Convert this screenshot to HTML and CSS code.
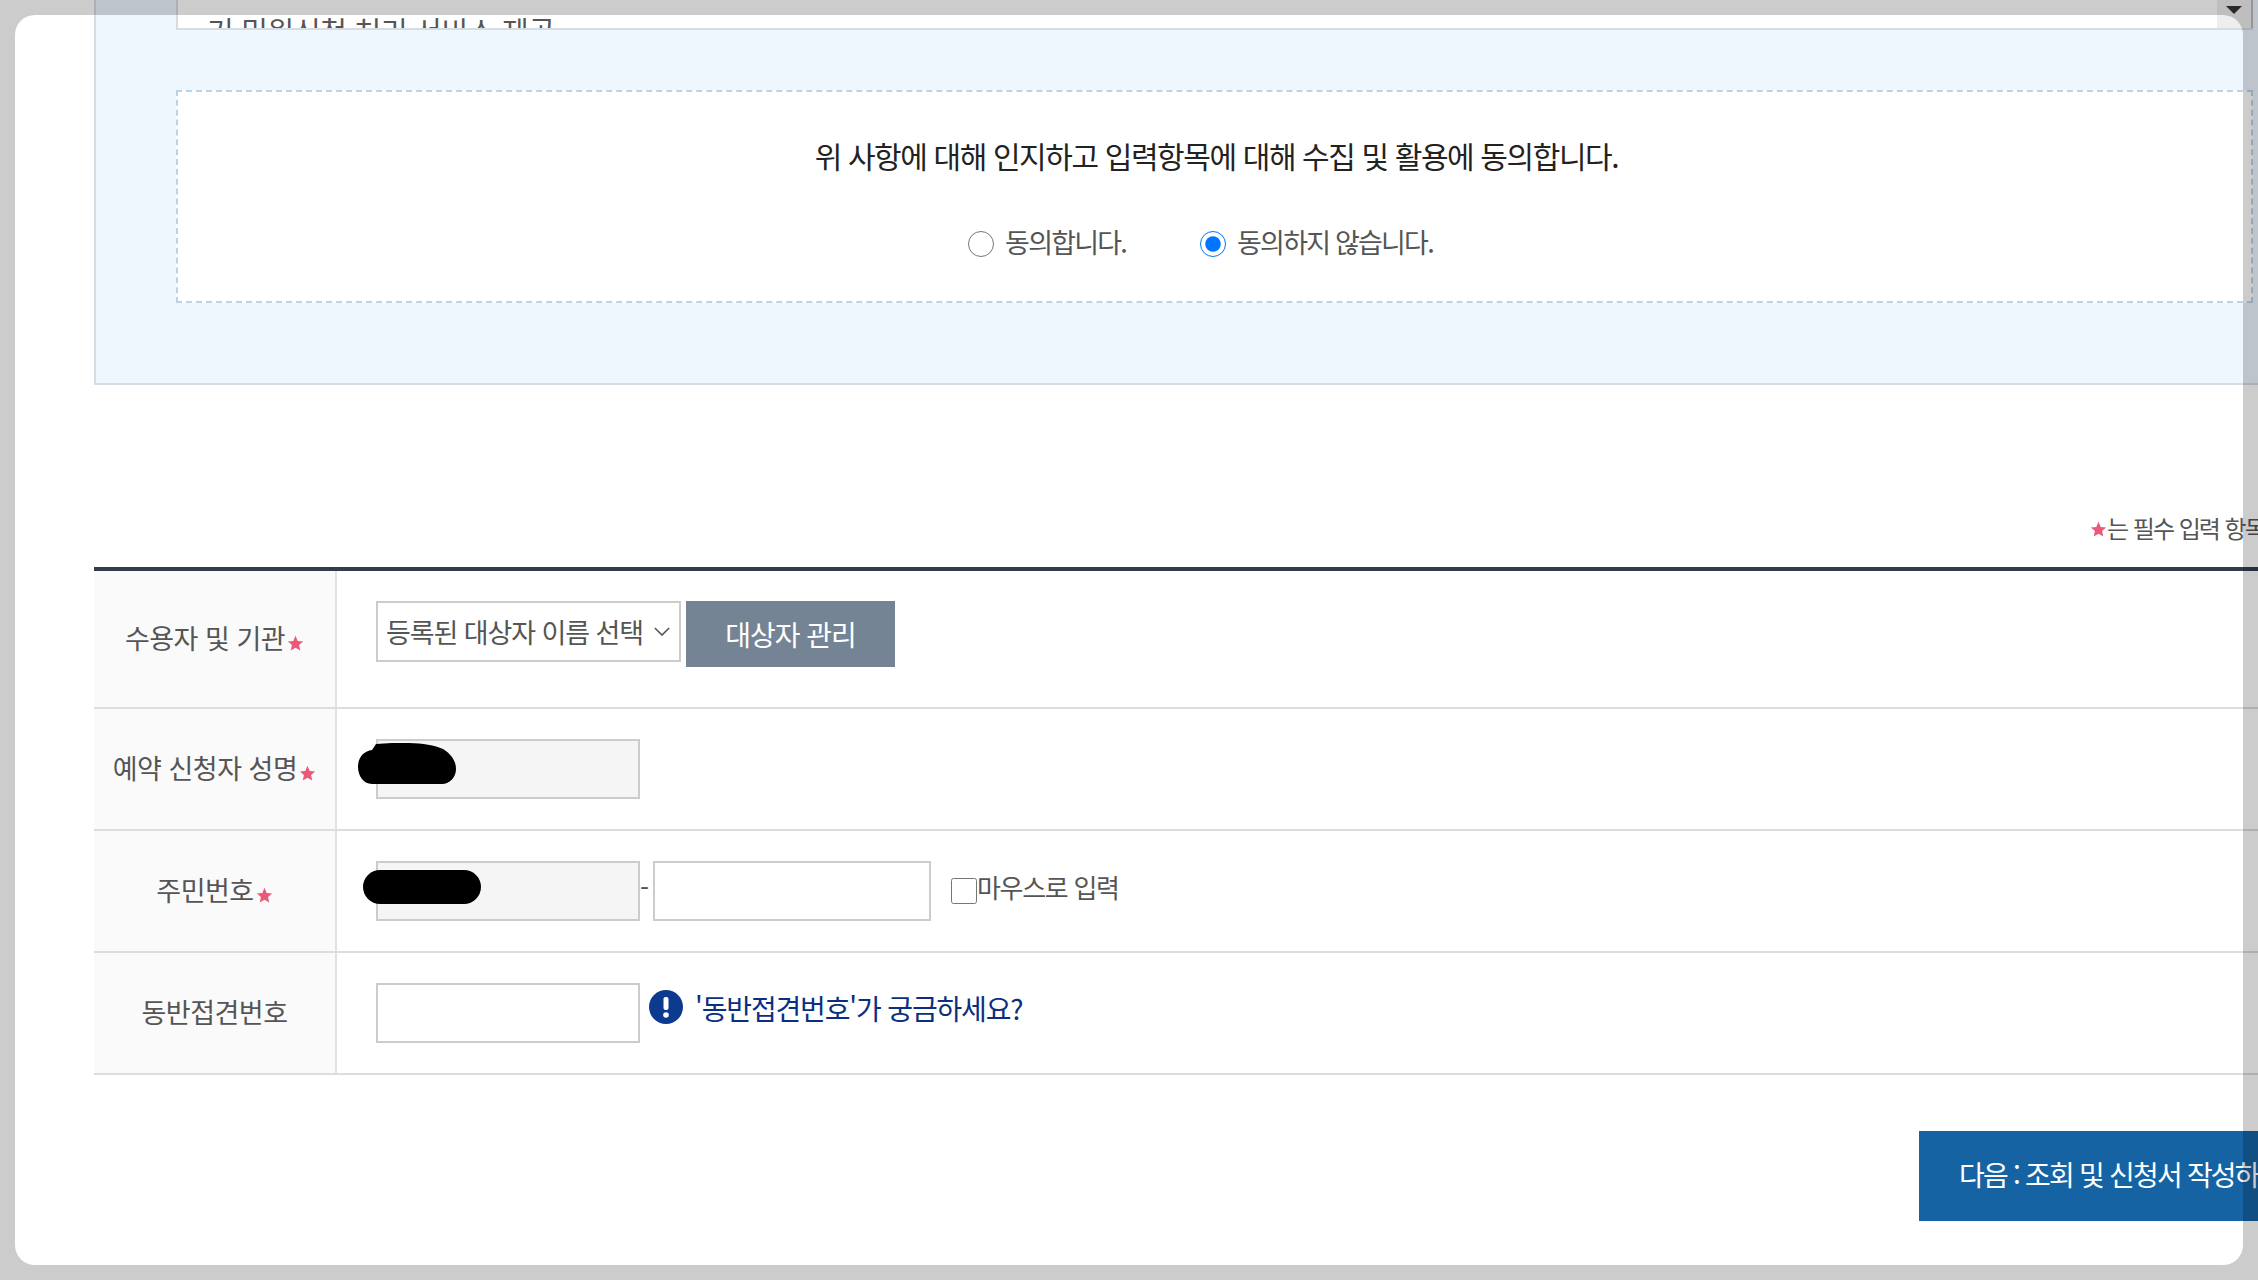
FILE: index.html
```html
<!DOCTYPE html>
<html lang="ko">
<head>
    <meta charset="UTF-8">
    <title>예약 신청</title>
    <link rel="stylesheet" href="styles.css">
</head>
<body>
    <div class="page">
        <!-- Consent panel -->
        <div class="consent">
            <div class="terms">
                <p class="terms-text">기 민원신청 처리 서비스 제공</p>
                <div class="scroll-btn"><span class="scroll-arrow"></span></div>
            </div>
            <div class="agree-box">
                <p class="agree-title">위 사항에 대해 인지하고 입력항목에 대해 수집 및 활용에 동의합니다.</p>
                <div class="agree-options">
                    <label class="agree-option"><input type="radio" name="agree">동의합니다.</label>
                    <label class="agree-option"><input type="radio" name="agree" checked>동의하지 않습니다.</label>
                </div>
            </div>
        </div>

        <div class="required-note">
            <svg class="star" viewBox="0 0 20 20"><path d="M10 1l2.600 6 6.400.6-4.800 4.300 1.400 6.300L10 15l-5.600 3.200 1.400-6.300L1 7.600 7.400 7z"/></svg>
            <span>는 필수 입력 항목입니다.</span>
        </div>

        <!-- Form -->
        <div class="form-table">
            <div class="form-row form-row-first">
                <div class="form-label">수용자 및 기관<svg class="star" viewBox="0 0 20 20"><path d="M10 1l2.600 6 6.400.6-4.800 4.300 1.400 6.300L10 15l-5.600 3.200 1.400-6.300L1 7.600 7.400 7z"/></svg></div>
                <div class="form-value">
                    <div class="select-box">
                        <span>등록된 대상자 이름 선택</span>
                        <svg class="chevron" viewBox="0 0 18 10"><path d="M1 1l8 8 8-8"/></svg>
                    </div>
                    <button class="btn-manage">대상자 관리</button>
                </div>
            </div>
            <div class="form-row">
                <div class="form-label">예약 신청자 성명<svg class="star" viewBox="0 0 20 20"><path d="M10 1l2.600 6 6.400.6-4.800 4.300 1.400 6.300L10 15l-5.600 3.200 1.400-6.300L1 7.600 7.400 7z"/></svg></div>
                <div class="form-value">
                    <div class="field-wrap">
                        <input type="text" class="field field-readonly" readonly>
                        <svg class="blob blob-name" viewBox="0 0 98 41"><path d="M18 1C40-1 70-1 85 6c10 6 13 14 13 20 0 8-6 15-14 15H14C5 41 0 32 0 24 0 14 6 8 14 7z"/></svg>
                    </div>
                </div>
            </div>
            <div class="form-row">
                <div class="form-label">주민번호<svg class="star" viewBox="0 0 20 20"><path d="M10 1l2.600 6 6.400.6-4.800 4.300 1.400 6.300L10 15l-5.600 3.200 1.400-6.300L1 7.600 7.400 7z"/></svg></div>
                <div class="form-value">
                    <div class="field-wrap">
                        <input type="text" class="field field-readonly" readonly>
                        <div class="blob blob-id"></div>
                    </div>
                    <span class="dash">-</span>
                    <input type="text" class="field field-wide">
                    <label class="mouse-input"><input type="checkbox">마우스로 입력</label>
                </div>
            </div>
            <div class="form-row">
                <div class="form-label">동반접견번호</div>
                <div class="form-value">
                    <input type="text" class="field">
                    <a class="help-link" href="#">
                        <svg class="help-icon" viewBox="0 0 34 34"><circle cx="17" cy="17" r="17"/><rect x="14.500" y="7" width="5" height="13" rx="2"/><circle cx="17" cy="25" r="2.800"/></svg>
                        '동반접견번호'가 궁금하세요?
                    </a>
                </div>
            </div>
        </div>

        <div class="actions">
            <button class="btn-next">다음 : 조회 및 신청서 작성하기</button>
        </div>
    </div>

    <div class="modal-hole"></div>
</body>
</html>
```

FILE: styles.css
```css
html, body {
    margin: 0;
    height: 100%;
    overflow: hidden;
    background: white;
}
body {
    font-family: "Noto Sans CJK KR", "Noto Sans", sans-serif;
    color: #555;
}
p {
    margin: 0;
}
.page {
    width: 2360px;
    height: 1280px;
    padding-left: 94px;
    box-sizing: border-box;
}

/* Consent panel */
.consent {
    height: 385px;
    box-sizing: border-box;
    padding: 0 107px 0 82px;
    background: #eef6fe;
    border-left: 2px solid #d5dde3;
    border-bottom: 2px solid #d5dde3;
}
.terms {
    display: flex;
    justify-content: space-between;
    height: 30px;
    overflow: hidden;
    box-sizing: border-box;
    margin-left: -2px;
    background: white;
    border-left: 2px solid #d5dde3;
    border-bottom: 2px solid #d5dde3;
}
.terms-text {
    padding: 11px 0 0 29px;
    font-size: 29px;
    line-height: 38px;
    letter-spacing: -0.3px;
}
.scroll-btn {
    flex: none;
    width: 36px;
    height: 28px;
    box-sizing: border-box;
    background: #eee;
    border-right: 2px solid #bbb;
}
.scroll-arrow {
    display: block;
    width: 0;
    margin: 6px 0 0 9px;
    border: 8px solid transparent;
    border-top: 8px solid #333;
    border-bottom: none;
}
.agree-box {
    height: 213px;
    box-sizing: border-box;
    margin: 60px 0 0 -2px;
    padding-left: 4px;
    background: white;
    border: 2px dashed #bcd3e6;
    text-align: center;
}
.agree-title {
    padding-top: 42px;
    font-size: 30px;
    line-height: 42px;
    letter-spacing: -1.4px;
    color: #222;
}
.agree-options {
    display: flex;
    justify-content: center;
    gap: 74px;
    margin: 48px 32px 0 0;
}
.agree-option {
    display: flex;
    align-items: center;
    gap: 11px;
    font-size: 27px;
    line-height: 36px;
    letter-spacing: -1.8px;
}
.agree-option input {
    width: 26px;
    height: 26px;
    margin: 4px 0 0;
}

.required-note {
    display: flex;
    align-items: center;
    height: 36px;
    margin-top: 124px;
    padding-left: 1996px;
    font-size: 24px;
    letter-spacing: -2px;
    word-spacing: 1px;
    white-space: nowrap;
}
.required-note .star {
    margin: 4px 0 0 0;
}
.star {
    flex: none;
    width: 17px;
    height: 17px;
    margin: 12px 0 0 2px;
    fill: #ea5a78;
}

/* Form */
.form-table {
    margin-top: 22px;
    border-top: 4px solid #333c4d;
}
.form-row {
    display: flex;
    height: 122px;
    box-sizing: border-box;
    border-bottom: 2px solid #ddd;
}
.form-row-first {
    height: 138px;
}
.form-label {
    display: flex;
    align-items: center;
    justify-content: center;
    flex: none;
    width: 243px;
    box-sizing: border-box;
    padding-bottom: 4px;
    background: #fafafa;
    border-right: 2px solid #e2e2e2;
    font-size: 27px;
    letter-spacing: -0.5px;
}
.form-value {
    display: flex;
    align-items: flex-start;
    padding: 30px 0 0 39px;
    font-size: 26px;
}
.select-box {
    display: flex;
    align-items: center;
    justify-content: space-between;
    width: 305px;
    height: 61px;
    box-sizing: border-box;
    padding: 0 9px 0 8px;
    border: 2px solid #ccc;
    font-size: 27px;
}
.select-box span {
    letter-spacing: -1.08px;
}
.chevron {
    width: 16px;
    height: 9px;
    fill: none;
    stroke: #555;
    stroke-width: 1.800;
}
.btn-manage {
    width: 209px;
    height: 66px;
    margin-left: 5px;
    border: none;
    background: #748494;
    color: white;
    font-family: inherit;
    font-size: 28px;
    letter-spacing: -1px;
}
.field-wrap {
    position: relative;
}
.field {
    display: block;
    width: 264px;
    height: 60px;
    box-sizing: border-box;
    border: 2px solid #ccc;
    background: white;
}
.field-readonly {
    background: #f5f5f5;
}
.field-wide {
    width: 278px;
}
.blob {
    position: absolute;
    background: black;
}
.blob-name {
    left: -18px;
    top: 4px;
    width: 98px;
    height: 41px;
    background: none;
    fill: black;
}
.blob-id {
    left: -13px;
    top: 9px;
    width: 118px;
    height: 34px;
    border-radius: 17px;
}
.dash {
    width: 13px;
    padding-top: 8px;
    line-height: 36px;
}
.mouse-input {
    display: flex;
    align-items: center;
    margin-left: 20px;
    padding-top: 8px;
    font-size: 26px;
    line-height: 36px;
    letter-spacing: -1.3px;
}
.mouse-input input {
    width: 26px;
    height: 26px;
    margin: 8px 0 0;
}
.help-link {
    display: flex;
    align-items: center;
    gap: 12px;
    height: 36px;
    margin: 7px 0 0 9px;
    color: #0b2f80;
    font-size: 28px;
    text-decoration: none;
    letter-spacing: -1.15px;
}
.help-icon {
    width: 34px;
    height: 34px;
    margin-bottom: 2px;
    fill: white;
}
.help-icon circle:first-child {
    fill: #0b3a8f;
}

.actions {
    display: flex;
    margin-top: 56px;
    padding-left: 1825px;
}
.btn-next {
    flex: none;
    height: 90px;
    padding: 0 40px 5px;
    border: none;
    background: #1663a3;
    color: white;
    font-family: inherit;
    font-size: 28px;
    letter-spacing: -1.8px;
    white-space: nowrap;
}

/* Dimmed page around the modal */
.modal-hole {
    position: fixed;
    left: 15px;
    top: 15px;
    width: 2228px;
    height: 1250px;
    border-radius: 20px;
    box-shadow: 0 0 0 2000px rgba(0,0,0,0.2);
}
```
